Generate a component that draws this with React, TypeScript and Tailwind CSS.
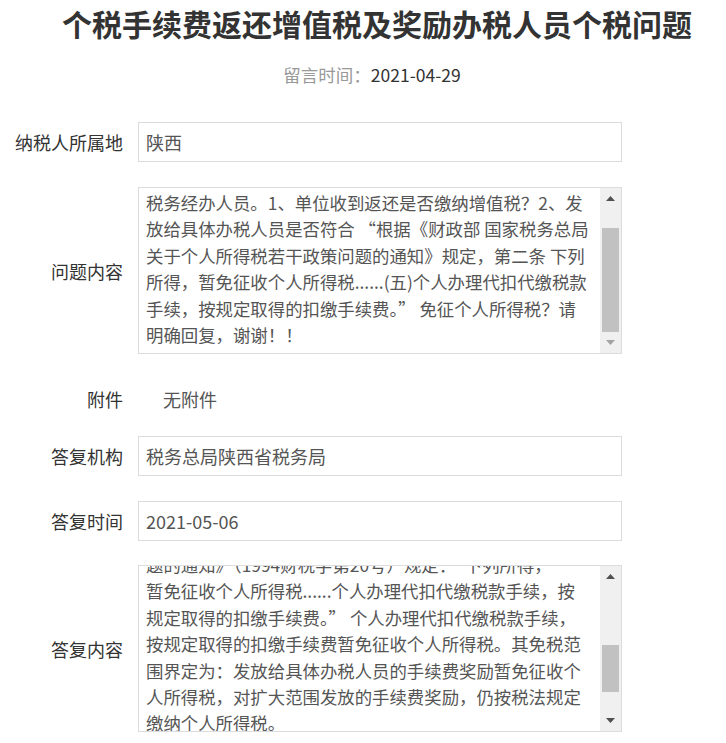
import React from "react";

function Arrow({ dir, color }: { dir: "up" | "down"; color: string }) {
  return (
    <svg width="9" height="5" viewBox="0 0 9 5">
      {dir === "up" ? (
        <polygon points="0,5 9,5 4.5,0" fill={color} />
      ) : (
        <polygon points="0,0 9,0 4.5,5" fill={color} />
      )}
    </svg>
  );
}

function Scrollbar({
  thumbTop,
  thumbHeight,
  downColor,
}: {
  thumbTop: number;
  thumbHeight: number;
  downColor: string;
}) {
  return (
    <div className="flex w-[21px] shrink-0 flex-col bg-[#f0f0f0]">
      <div className="flex h-[21px] items-center justify-center">
        <Arrow dir="up" color="#505050" />
      </div>
      <div className="flex-1">
        <div
          className="mx-[2px] bg-[#c1c1c1]"
          style={{ marginTop: thumbTop, height: thumbHeight }}
        />
      </div>
      <div className="flex h-[21px] items-center justify-center">
        <Arrow dir="down" color={downColor} />
      </div>
    </div>
  );
}

function Label({ children }: { children: React.ReactNode }) {
  return (
    <div className="w-[123px] shrink-0 text-right text-[18px] leading-[24px] text-[#333]">
      {children}
    </div>
  );
}

function InputRow({ label, value, className = "" }: { label: string; value: string; className?: string }) {
  return (
    <div className={"flex items-center gap-[15px] " + className}>
      <Label>{label}</Label>
      <div className="flex h-[40px] w-[484px] items-center border border-[#dcdcdc] pl-[7px] text-[18px] text-[#555]">
        {value}
      </div>
    </div>
  );
}

function AreaRow({
  label,
  lines,
  offset,
  thumbTop,
  thumbHeight,
  downColor,
  className = "",
}: {
  label: string;
  lines: string[];
  offset: number;
  thumbTop: number;
  thumbHeight: number;
  downColor: string;
  className?: string;
}) {
  return (
    <div className={"flex items-center gap-[15px] " + className}>
      <Label>{label}</Label>
      <div className="flex h-[167px] w-[484px] border border-[#dcdcdc]">
        <div className="flex-1 overflow-hidden pl-[7px]">
          <div style={{ marginTop: offset }}>
            {lines.map((l, i) => (
              <div key={i} className="whitespace-nowrap text-[17.4px] leading-[26.4px] text-[#555]">
                {l}
              </div>
            ))}
          </div>
        </div>
        <Scrollbar thumbTop={thumbTop} thumbHeight={thumbHeight} downColor={downColor} />
      </div>
    </div>
  );
}

export default function App() {
  return (
    <div className="min-h-[743px] w-[726px] bg-white font-['Noto_Sans_CJK_SC','Microsoft_YaHei',sans-serif]">
      <div className="whitespace-nowrap pl-[62px] pt-[1px] text-[30px] font-bold leading-[45px] text-[#333]">
        个税手续费返还增值税及奖励办税人员个税问题
      </div>
      <div className="mt-[17px] text-center text-[17.5px] leading-[24px]">
        <span className="pl-[18px] text-[#999]">留言时间：</span>
        <span className="text-[#333]">2021-04-29</span>
      </div>

      <InputRow className="mt-[35px]" label="纳税人所属地" value="陕西" />

      <AreaRow
        className="mt-[25px]"
        label="问题内容"
        offset={2}
        thumbTop={19}
        thumbHeight={104}
        downColor="#a3a3a3"
        lines={[
          "税务经办人员。1、单位收到返还是否缴纳增值税？2、发",
          "放给具体办税人员是否符合 “根据《财政部 国家税务总局",
          "关于个人所得税若干政策问题的通知》规定，第二条 下列",
          "所得，暂免征收个人所得税......(五)个人办理代扣代缴税款",
          "手续，按规定取得的扣缴手续费。” 免征个人所得税？请",
          "明确回复，谢谢！！",
        ]}
      />

      <div className="mt-[33px] flex items-center gap-[15px]">
        <Label>附件</Label>
        <div className="pl-[25px] text-[18px] leading-[24px] text-[#555]">无附件</div>
      </div>

      <InputRow className="mt-[25px]" label="答复机构" value="税务总局陕西省税务局" />
      <InputRow className="mt-[25px]" label="答复时间" value="2021-05-06" />

      <AreaRow
        className="mt-[24px]"
        label="答复内容"
        offset={-14}
        thumbTop={58}
        thumbHeight={47}
        downColor="#505050"
        lines={[
          "题的通知》（1994财税字第20号）规定：“下列所得，",
          "暂免征收个人所得税......个人办理代扣代缴税款手续，按",
          "规定取得的扣缴手续费。” 个人办理代扣代缴税款手续，",
          "按规定取得的扣缴手续费暂免征收个人所得税。其免税范",
          "围界定为：发放给具体办税人员的手续费奖励暂免征收个",
          "人所得税，对扩大范围发放的手续费奖励，仍按税法规定",
          "缴纳个人所得税。",
        ]}
      />
    </div>
  );
}
